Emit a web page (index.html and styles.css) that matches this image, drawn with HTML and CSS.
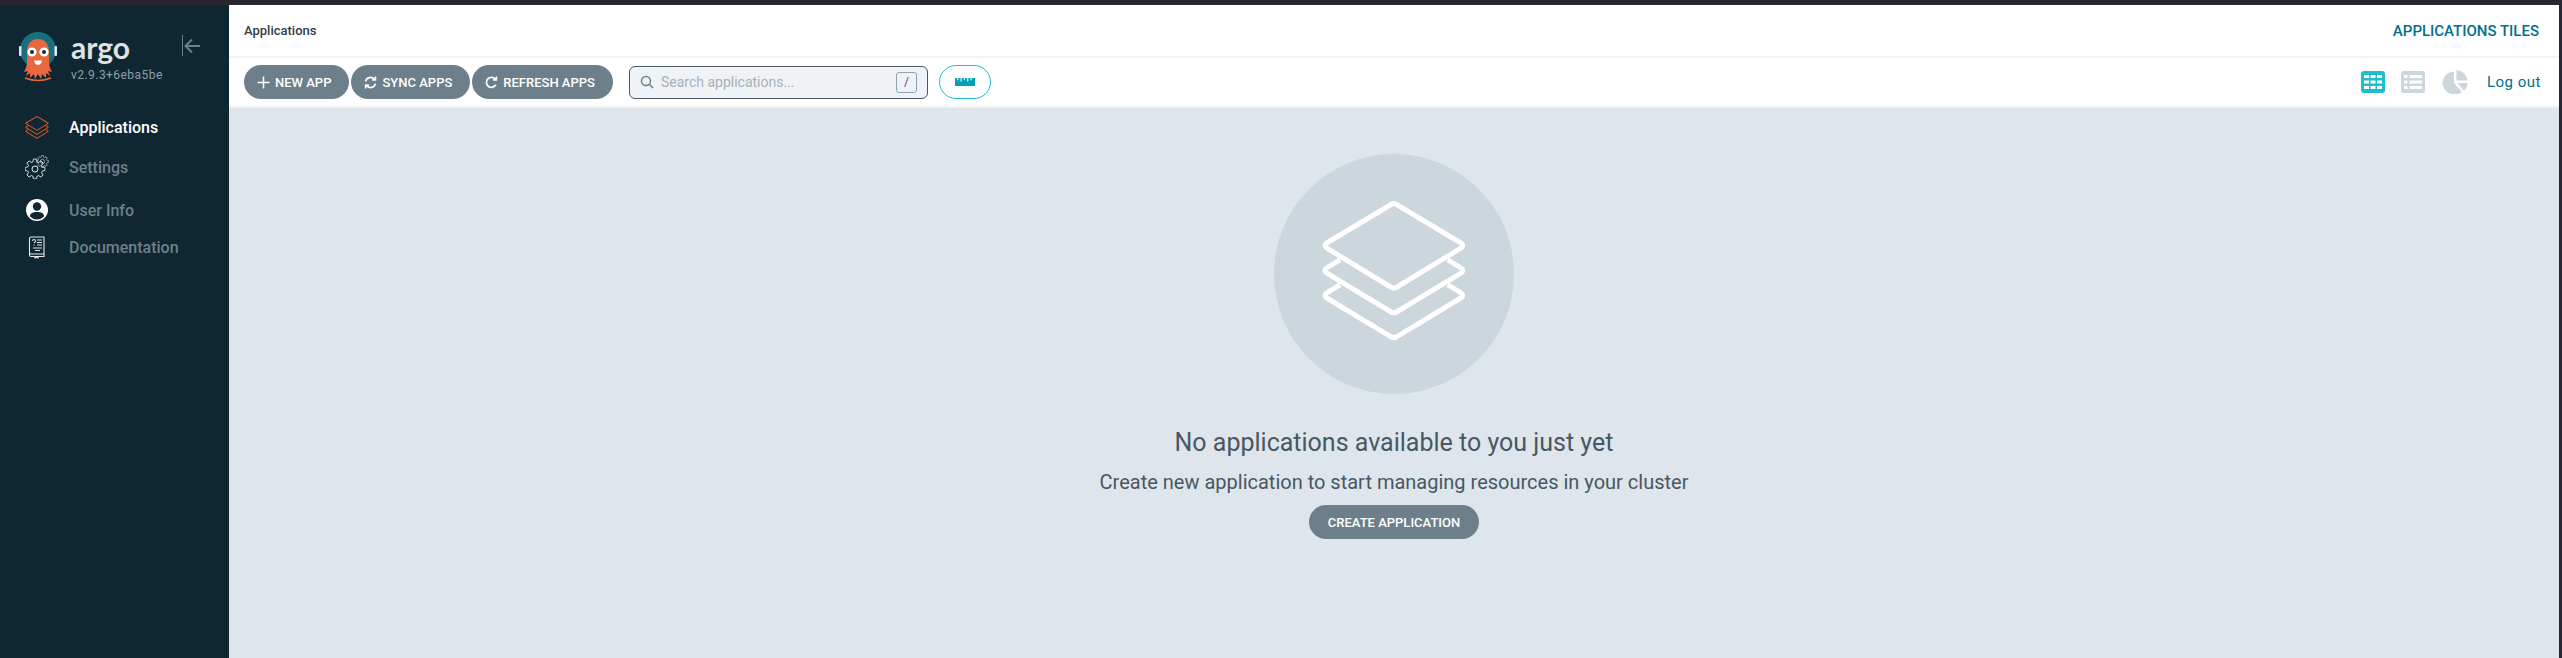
FILE: index.html
```html
<!DOCTYPE html>
<html lang="en">
<head>
    <meta charset="UTF-8">
    <meta name="viewport" content="width=device-width, initial-scale=1.0">
    <title>Applications - Argo CD</title>
    <link rel="stylesheet" href="styles.css">
</head>
<body>
    <svg class="defs" width="0" height="0">
        <defs>
            <g id="stack">
                <path d="M388 182Q402 170 416 182L600 292Q618 302 600 312L416 424Q402 436 388 424L204 312Q186 302 204 292Z"/>
                <path d="M240 345L204 367Q186 377 204 387L388 498Q402 510 416 498L600 387Q618 377 600 367L564 345"/>
                <path d="M240 420L204 442Q186 452 204 462L388 573Q402 585 416 573L600 462Q618 452 600 442L564 420"/>
            </g>
            <path id="gear-part" d="M7.21-2.07L9.88-1.56V1.56L7.21 2.07A7.5 7.5 0 0 1 6.56 3.64"/>
            <g id="gear">
                <use href="#gear-part"/>
                <use href="#gear-part" transform="rotate(45)"/>
                <use href="#gear-part" transform="rotate(90)"/>
                <use href="#gear-part" transform="rotate(135)"/>
                <use href="#gear-part" transform="rotate(180)"/>
                <use href="#gear-part" transform="rotate(225)"/>
                <use href="#gear-part" transform="rotate(270)"/>
                <use href="#gear-part" transform="rotate(315)"/>
            </g>
        </defs>
    </svg>

    <div class="window">
        <aside class="sidebar">
            <div class="brand">
                <svg class="brand-logo" width="40" height="52" viewBox="0 0 40 52">
                    <circle cx="19" cy="18" r="18" fill="#18707f"/>
                    <rect x="0" y="14" width="2.5" height="10" rx="1" fill="#e4e9eb"/>
                    <rect x="35.5" y="14" width="2.5" height="10" rx="1" fill="#e4e9eb"/>
                    <path d="M8 20C8 11 13 7 19 7S30 11 30 20V30C30 33 31 37 33 40L29 39 31 44 27 41 27 46 23 42 22 47 19 42 16 47 15 42 11 46 11 41 7 44 9 39 5 40C7 37 8 33 8 30Z" fill="#e9683f"/>
                    <path d="M6 46Q19 51 32 46" stroke="#e9683f" stroke-width="1.5" fill="none"/>
                    <circle cx="13" cy="20" r="4.6" fill="#fff"/>
                    <circle cx="25" cy="20" r="4.6" fill="#fff"/>
                    <circle cx="13" cy="20" r="2" fill="#1c2b33"/>
                    <circle cx="25" cy="20" r="2" fill="#1c2b33"/>
                    <path d="M15 28.500H23Q22 33 19 33T15 28.500Z" fill="#fff"/>
                </svg>
                <div class="brand-text">
                    <div class="brand-name">argo</div>
                    <div class="brand-version">v2.9.3+6eba5be</div>
                </div>
                <svg class="collapse" width="18" height="22" viewBox="0 0 18 22">
                    <path d="M.5 0V21" stroke-width="1"/>
                    <path d="M18 11H4M10 4.500L3.500 11 10 17.500" stroke-width="2"/>
                </svg>
            </div>
            <nav class="nav">
                <a class="nav-item active">
                    <svg class="nav-icon stack-small" width="24" height="23" viewBox="180 165 445 430"><use href="#stack"/></svg>
                    <span>Applications</span>
                </a>
                <a class="nav-item">
                    <svg class="nav-icon" width="24" height="24" viewBox="0 0 24 24">
                        <g class="gear-line" transform="translate(10 14)"><use href="#gear"/><circle r="3"/></g>
                        <g class="gear-line" transform="translate(17.500 6.500) scale(.6)"><use href="#gear"/><circle r="3.500"/></g>
                    </svg>
                    <span>Settings</span>
                </a>
                <a class="nav-item item-user">
                    <svg class="nav-icon" width="24" height="24" viewBox="0 0 24 24">
                        <circle cx="12" cy="12" r="11" fill="#fff"/>
                        <circle cx="12" cy="8.500" r="4.200" fill="#0f2733"/>
                        <path d="M5 18.500C5 15 8 14 12 14S19 15 19 18.500Q16 21.500 12 21.500T5 18.500Z" fill="#0f2733"/>
                    </svg>
                    <span>User Info</span>
                </a>
                <a class="nav-item item-docs">
                    <svg class="nav-icon doc-line" width="24" height="24" viewBox="0 0 24 24">
                        <path d="M6 2H19V19H6Q4.500 19 4.500 17.500V3.500Q4.500 2 6 2ZM4.500 17.500V20Q4.500 21.500 6 21.500H19V19M10 21.500V23L11.500 22 13 23V21.500"/>
                        <path d="M7.500 6Q7.500 4.500 9 4.500T10.500 6Q10.500 7 9 8M9 9.500V10.500M12 5H17M12 7.500H17M12 10H17M8 13H17M10 15.500H15"/>
                    </svg>
                    <span>Documentation</span>
                </a>
            </nav>
        </aside>

        <main class="main">
            <header class="topbar">
                <div class="page-title">Applications</div>
                <a class="tiles-link">APPLICATIONS TILES</a>
            </header>
            <div class="toolbar">
                <div class="actions">
                    <button class="btn">
                        <svg width="13" height="13" viewBox="0 0 12 12"><path d="M6 .5V11.500M.5 6H11.500" stroke="#fff" stroke-width="1.400"/></svg>
                        NEW APP
                    </button>
                    <button class="btn">
                        <svg width="13" height="13" viewBox="0 0 12 12" class="btn-icon"><path d="M1.500 5A4.600 4.600 0 0 1 9.500 3M10.500 7A4.600 4.600 0 0 1 2.500 9M10.500 .5V3.500H7.500M1.500 11.500V8.500H4.500"/></svg>
                        SYNC APPS
                    </button>
                    <button class="btn">
                        <svg width="13" height="13" viewBox="0 0 12 12" class="btn-icon"><path d="M10 8A4.600 4.600 0 1 1 9.500 3M10.500 .5V3.500H7.500"/></svg>
                        REFRESH APPS
                    </button>
                </div>
                <div class="search">
                    <svg width="14" height="14" viewBox="0 0 14 14" class="search-icon"><circle cx="6" cy="6" r="4.500"/><path d="M9.500 9.500L13 13"/></svg>
                    <span class="search-text">Search applications...</span>
                    <span class="search-key">/</span>
                </div>
                <button class="btn-outline">
                    <svg width="20" height="10" viewBox="0 0 18 9"><path fill="#00a2b3" d="M0 1H2V3H3V1H5V4H6V1H8V3H9V1H11V4H12V1H14V3H15V1H18V8H0Z"/></svg>
                </button>
                <div class="view-tools">
                    <svg width="24" height="22" viewBox="0 0 24 22">
                        <rect width="24" height="22" rx="3" fill="#1fbdd2"/>
                        <path fill="#fff" d="M3 4H8V7H3ZM9.500 4H14.500V7H9.500ZM16 4H21V7H16ZM3 9.500H8V12.500H3ZM9.500 9.500H14.500V12.500H9.500ZM16 9.500H21V12.500H16ZM3 15H8V18H3ZM9.500 15H14.500V18H9.500ZM16 15H21V18H16Z"/>
                    </svg>
                    <svg width="24" height="22" viewBox="0 0 24 22">
                        <rect width="24" height="22" rx="3" fill="#ccd6dd"/>
                        <path fill="#fff" d="M3 4H6.500V7H3ZM8.500 4H21V7H8.500ZM3 9.500H6.500V12.500H3ZM8.500 9.500H21V12.500H8.500ZM3 15H6.500V18H3ZM8.500 15H21V18H8.500Z"/>
                    </svg>
                    <svg class="view-pie" width="26" height="24" viewBox="0 0 26 24">
                        <path fill="#ccd6dd" d="M12 1.500V13L20 22A12 11.500 0 1 1 12 1.500Z"/>
                        <path fill="#ccd6dd" d="M14.500 0A11.500 11.500 0 0 1 25.500 10.500H14.500Z"/>
                        <path fill="#ccd6dd" d="M15.500 13H25.500A12 12 0 0 1 22 21Z"/>
                    </svg>
                    <a class="logout">Log out</a>
                </div>
            </div>
            <section class="empty">
                <div class="empty-circle">
                    <svg class="stack-big" width="148" height="143" viewBox="180 165 445 430"><use href="#stack"/></svg>
                </div>
                <h4 class="empty-title">No applications available to you just yet</h4>
                <h5 class="empty-sub">Create new application to start managing resources in your cluster</h5>
                <button class="btn btn-create">CREATE APPLICATION</button>
            </section>
        </main>
    </div>
</body>
</html>
```

FILE: styles.css
```css
html, body {
    height: 100%;
}
body {
    margin: 0;
    font-family: Roboto, "Liberation Sans", sans-serif;
    background-color: #282631;
    padding: 5px 3px 0 0;
    box-sizing: border-box;
    overflow: hidden;
}
.defs {
    position: absolute;
}
.window {
    display: flex;
    height: 100%;
}

/* sidebar */
.sidebar {
    width: 229px;
    flex-shrink: 0;
    background-color: #0f2733;
}
.brand {
    display: flex;
    align-items: flex-start;
    padding: 27px 0 0 19px;
    height: 85px;
    box-sizing: border-box;
}
.brand-logo {
    flex-shrink: 0;
}
.brand-text {
    margin-left: 12px;
    width: 111px;
}
.brand-name {
    font-family: Lato, sans-serif;
    font-size: 30px;
    line-height: 30px;
    font-weight: 700;
    color: #dfe3e4;
}
.brand-version {
    font-size: 12px;
    line-height: 14px;
    margin-top: 6px;
    letter-spacing: .45px;
    color: #8ba0ad;
}
.collapse {
    fill: none;
    stroke: #6d7f8b;
    margin-top: 3px;
}
.nav {
    padding-top: 17px;
}
.nav-item {
    display: flex;
    align-items: center;
    height: 40px;
    padding-left: 25px;
    font-size: 16px;
    font-weight: 500;
    color: #6d7f8b;
}
.nav-item.active {
    color: #fff;
}
.item-user {
    margin-top: 3px;
}
.item-docs {
    margin-top: -3px;
}
.nav-icon {
    flex-shrink: 0;
    margin-right: 20px;
}
.stack-small {
    fill: none;
    stroke: #d9572b;
    stroke-width: 20;
}
.gear-line {
    fill: none;
    stroke: #e4e9eb;
    stroke-width: .9;
}
.gear-line circle {
    stroke-width: 1;
}
.doc-line {
    fill: none;
    stroke: #e4e9eb;
    stroke-width: 1.100;
}

/* main area */
.main {
    flex: 1;
    display: flex;
    flex-direction: column;
    min-width: 0;
    background-color: #dee6eb;
}
.topbar {
    display: flex;
    justify-content: space-between;
    align-items: center;
    height: 51px;
    padding: 0 20px 0 15px;
    flex-shrink: 0;
    background-color: #fff;
    border-bottom: 2px solid #eff3f5;
}
.page-title {
    font-size: 13px;
    font-weight: 500;
    color: #363c4a;
}
.tiles-link {
    font-size: 15px;
    font-weight: 500;
    color: #00708c;
}
.toolbar {
    display: flex;
    align-items: center;
    height: 48px;
    flex-shrink: 0;
    padding: 0 18px 0 15px;
    background-color: #fff;
}
.actions {
    display: flex;
    gap: 2px;
}
.btn {
    display: inline-flex;
    align-items: center;
    justify-content: center;
    gap: 5px;
    height: 34px;
    padding: 0 18px 0 13px;
    border: none;
    border-radius: 17px;
    background-color: #6d7f8b;
    color: #fff;
    font-family: inherit;
    font-size: 13px;
    font-weight: 500;
}
.btn-icon {
    fill: none;
    stroke: #fff;
    stroke-width: 1.600;
}
.search {
    display: flex;
    align-items: center;
    width: 299px;
    height: 33px;
    margin-left: 16px;
    padding: 0 10px;
    box-sizing: border-box;
    background-color: #eff3f5;
    border: 1px solid #495763;
    border-radius: 6px;
}
.search-icon {
    fill: none;
    stroke: #6d7f8b;
    stroke-width: 1.500;
}
.search-text {
    flex: 1;
    margin-left: 7px;
    font-size: 14px;
    color: #a5b2ba;
}
.search-key {
    width: 19px;
    height: 19px;
    line-height: 19px;
    text-align: center;
    border: 1px solid #8fa4b1;
    border-radius: 3px;
    font-size: 12px;
    color: #495763;
}
.btn-outline {
    display: flex;
    align-items: center;
    justify-content: center;
    width: 52px;
    height: 34px;
    margin-left: 11px;
    background-color: #fff;
    border: 1px solid #1fbdd2;
    border-radius: 17px;
}
.view-tools {
    display: flex;
    align-items: center;
    margin-left: auto;
    gap: 16px;
}
.view-pie {
    margin-left: 1px;
}
.logout {
    margin-left: 3px;
    font-size: 15px;
    letter-spacing: .5px;
    color: #00708c;
}

/* empty state */
.empty {
    flex: 1;
    display: flex;
    flex-direction: column;
    align-items: center;
    padding-top: 46px;
    border-top: 2px solid #eff3f5;
}
.empty-circle {
    display: flex;
    align-items: center;
    justify-content: center;
    width: 240px;
    height: 240px;
    border-radius: 50%;
    background-color: #ccd6dd;
}
.stack-big {
    fill: none;
    stroke: #fff;
    stroke-width: 15;
    margin-bottom: 5px;
}
.empty-title {
    margin: 33px 0 0;
    font-size: 25px;
    line-height: 32px;
    font-weight: 400;
    color: #495763;
}
.empty-sub {
    margin: 11px 0 0;
    font-size: 20px;
    line-height: 24px;
    font-weight: 400;
    color: #495763;
}
.btn-create {
    margin-top: 11px;
    width: 170px;
    padding: 0;
    font-size: 13px;
}
```
